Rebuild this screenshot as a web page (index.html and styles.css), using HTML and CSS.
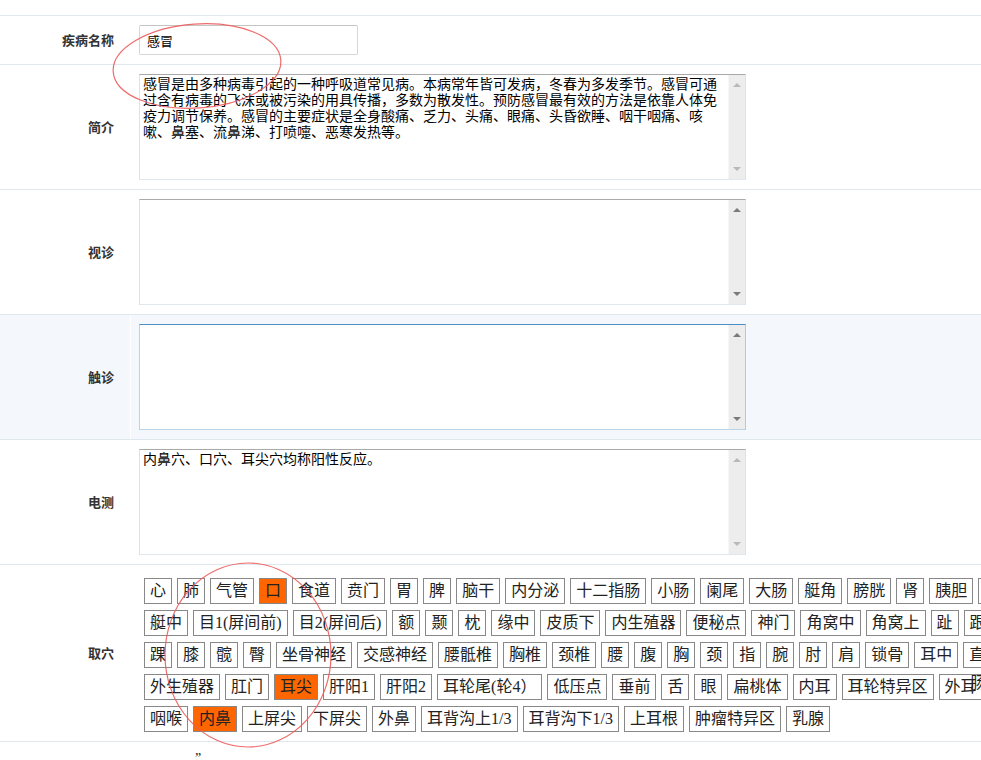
FILE: index.html
```html
<!DOCTYPE html>
<html lang="zh-CN">
<head>
<meta charset="utf-8">
<title>疾病</title>
<link rel="stylesheet" href="styles.css">
</head>
<body>
<div class="page">
  <div class="form">
    <div class="row">
      <div class="lbl">疾病名称</div>
      <div class="val"><input class="txt" type="text" value="感冒"></div>
    </div>
    <div class="row">
      <div class="lbl">简介</div>
      <div class="val">
        <div class="ta"><textarea>感冒是由多种病毒引起的一种呼吸道常见病。本病常年皆可发病，冬春为多发季节。感冒可通过含有病毒的飞沫或被污染的用具传播，多数为散发性。预防感冒最有效的方法是依靠人体免疫力调节保养。感冒的主要症状是全身酸痛、乏力、头痛、眼痛、头昏欲睡、咽干咽痛、咳嗽、鼻塞、流鼻涕、打喷嚏、恶寒发热等。</textarea><div class="sb dim"><i class="up"></i><i class="dn"></i></div></div>
      </div>
    </div>
    <div class="row">
      <div class="lbl">视诊</div>
      <div class="val">
        <div class="ta"><textarea></textarea><div class="sb"><i class="up"></i><i class="dn"></i></div></div>
      </div>
    </div>
    <div class="row hover">
      <div class="lbl">触诊</div>
      <div class="val">
        <div class="ta focus"><textarea></textarea><div class="sb"><i class="up"></i><i class="dn"></i></div></div>
      </div>
    </div>
    <div class="row">
      <div class="lbl">电测</div>
      <div class="val">
        <div class="ta"><textarea>内鼻穴、口穴、耳尖穴均称阳性反应。</textarea><div class="sb dim"><i class="up"></i><i class="dn"></i></div></div>
      </div>
    </div>
    <div class="row">
      <div class="lbl">取穴</div>
      <div class="val">
        <div class="points">
          <div class="prow">
            <span class="pt">心</span><span class="pt">肺</span><span class="pt">气管</span><span class="pt on">口</span><span class="pt">食道</span><span class="pt">贲门</span><span class="pt">胃</span><span class="pt">脾</span><span class="pt">脑干</span><span class="pt">内分泌</span><span class="pt">十二指肠</span><span class="pt">小肠</span><span class="pt">阑尾</span><span class="pt">大肠</span><span class="pt">艇角</span><span class="pt">膀胱</span><span class="pt">肾</span><span class="pt">胰胆</span><span class="pt">肝</span>
          </div>
          <div class="prow">
            <span class="pt">艇中</span><span class="pt">目1(屏间前)</span><span class="pt">目2(屏间后)</span><span class="pt">额</span><span class="pt">颞</span><span class="pt">枕</span><span class="pt">缘中</span><span class="pt">皮质下</span><span class="pt">内生殖器</span><span class="pt">便秘点</span><span class="pt">神门</span><span class="pt">角窝中</span><span class="pt">角窝上</span><span class="pt">趾</span><span class="pt">跟</span>
          </div>
          <div class="prow">
            <span class="pt">踝</span><span class="pt">膝</span><span class="pt">髋</span><span class="pt">臀</span><span class="pt">坐骨神经</span><span class="pt">交感神经</span><span class="pt">腰骶椎</span><span class="pt">胸椎</span><span class="pt">颈椎</span><span class="pt">腰</span><span class="pt">腹</span><span class="pt">胸</span><span class="pt">颈</span><span class="pt">指</span><span class="pt">腕</span><span class="pt">肘</span><span class="pt">肩</span><span class="pt">锁骨</span><span class="pt">耳中</span><span class="pt squeezed">直<b class="spill">肠</b></span>
          </div>
          <div class="prow">
            <span class="pt">外生殖器</span><span class="pt">肛门</span><span class="pt on">耳尖</span><span class="pt">肝阳1</span><span class="pt">肝阳2</span><span class="pt">耳轮尾(轮4）</span><span class="pt">低压点</span><span class="pt">垂前</span><span class="pt">舌</span><span class="pt">眼</span><span class="pt">扁桃体</span><span class="pt">内耳</span><span class="pt">耳轮特异区</span><span class="pt clear">外耳</span>
          </div>
          <div class="prow">
            <span class="pt">咽喉</span><span class="pt on">内鼻</span><span class="pt">上屏尖</span><span class="pt">下屏尖</span><span class="pt">外鼻</span><span class="pt">耳背沟上1/3</span><span class="pt">耳背沟下1/3</span><span class="pt">上耳根</span><span class="pt">肿瘤特异区</span><span class="pt">乳腺</span>
          </div>
        </div>
      </div>
    </div>
  </div>
  <div class="after">”</div>
  <svg class="marks" width="981" height="760" viewBox="0 0 981 760" aria-hidden="true">
    <ellipse cx="197" cy="66" rx="84" ry="42" transform="rotate(-4 197 66)" />
    <ellipse cx="248" cy="655" rx="83" ry="92" />
  </svg>
</div>
</body>
</html>
```
FILE: styles.css
```css
html, body {
  margin: 0;
  padding: 0;
  background: #ffffff;
  overflow: hidden;
}

body {
  font-family: "Noto Sans CJK SC", "Liberation Sans", sans-serif;
  color: #333333;
  width: 981px;
  height: 760px;
}

.page {
  position: relative;
  padding-top: 15px;
  width: 981px;
}

.form {
  border-top: 1px solid #dfe7ef;
}

.row {
  display: grid;
  grid-template-columns: 130px 1fr;
  border-bottom: 1px solid #dfe7ef;
}

.row.hover {
  background: #f4f7fb;
}

.lbl {
  display: flex;
  align-items: center;
  justify-content: flex-end;
  padding-right: 16px;
  font-size: 13px;
  font-weight: bold;
  color: #333333;
  line-height: 16px;
}

.val {
  border-left: 1px solid #ffffff;
  padding: 9px 0 9px 8px;
  min-width: 0;
}

.txt {
  display: block;
  box-sizing: border-box;
  width: 219px;
  height: 30px;
  margin: 0;
  padding: 0 7px;
  border: 1px solid #d6d6d6;
  border-top-color: #c4c4c4;
  border-radius: 2px;
  background: #ffffff;
  font-family: "Noto Sans CJK SC", sans-serif;
  font-size: 13px;
  color: #000000;
  outline: none;
}

.ta {
  display: flex;
  box-sizing: border-box;
  width: 607px;
  height: 106px;
  border: 1px solid;
  border-color: #a9a9a9 #dce2e9 #e1e7ee #dce2e9;
  background: #ffffff;
}

.ta.focus {
  border-color: #4a8fc4 #a9cbe4 #b9d3e9 #b9d3e9;
}

.ta textarea {
  flex: 1;
  min-width: 0;
  margin: 0;
  border: 0;
  padding: 0 0 0 3px;
  resize: none;
  overflow: hidden;
  outline: none;
  background: #ffffff;
  font-family: "Noto Sans CJK SC", sans-serif;
  font-size: 14px;
  line-height: 16px;
  color: #000000;
}

.sb {
  width: 16px;
  flex: none;
  display: flex;
  flex-direction: column;
  justify-content: space-between;
  align-items: center;
  padding: 8px 0;
  background: #ededed;
  border-left: 1px solid #f7f7f7;
}

.sb i {
  display: block;
  width: 0;
  height: 0;
  border-left: 4px solid transparent;
  border-right: 4px solid transparent;
}

.sb .up {
  border-bottom: 4px solid #7a7a7a;
}

.sb .dn {
  border-top: 4px solid #7a7a7a;
}

.sb.dim .up {
  border-bottom-color: #b9b9b9;
}

.sb.dim .dn {
  border-top-color: #b9b9b9;
}

.points {
  display: flex;
  flex-direction: column;
  gap: 6px;
  padding: 4px 0 0 5px;
}

.prow {
  display: flex;
  gap: 5px;
  flex-wrap: nowrap;
}

.pt {
  flex: none;
  position: relative;
  box-sizing: border-box;
  height: 26px;
  padding: 0 5px;
  border: 1px solid #888888;
  background: #ffffff;
  font-family: "Liberation Serif", "Noto Sans CJK SC", serif;
  font-size: 16px;
  line-height: 24px;
  color: #222222;
  white-space: nowrap;
}

.pt.on {
  background: #ff6600;
}

.pt.clear {
  background: transparent;
}

.pt .spill {
  position: absolute;
  left: 6px;
  top: 28px;
  font-weight: normal;
}

.after {
  padding: 10px 0 0 195px;
  font-family: "Liberation Serif", serif;
  font-size: 14px;
  line-height: 14px;
  color: #222222;
}

.marks {
  position: absolute;
  left: 0;
  top: 0;
  pointer-events: none;
}

.marks ellipse {
  fill: none;
  stroke: #ec5b5b;
  stroke-width: 1.2;
  opacity: 0.9;
}
```
